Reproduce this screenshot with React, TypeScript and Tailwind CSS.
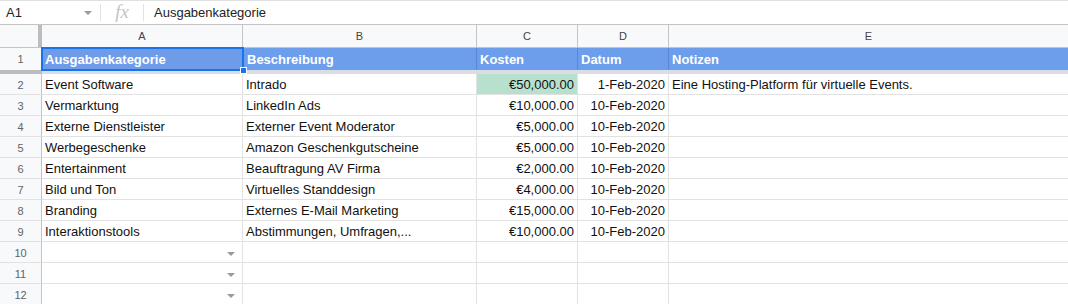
import React from "react";

type Row = {
  a: string;
  b: string;
  c: string;
  d: string;
  e: string;
};

const rows: Row[] = [
  { a: "Event Software", b: "Intrado", c: "€50,000.00", d: "1-Feb-2020", e: "Eine Hosting-Platform für virtuelle Events." },
  { a: "Vermarktung", b: "LinkedIn Ads", c: "€10,000.00", d: "10-Feb-2020", e: "" },
  { a: "Externe Dienstleister", b: "Externer Event Moderator", c: "€5,000.00", d: "10-Feb-2020", e: "" },
  { a: "Werbegeschenke", b: "Amazon Geschenkgutscheine", c: "€5,000.00", d: "10-Feb-2020", e: "" },
  { a: "Entertainment", b: "Beauftragung AV Firma", c: "€2,000.00", d: "10-Feb-2020", e: "" },
  { a: "Bild und Ton", b: "Virtuelles Standdesign", c: "€4,000.00", d: "10-Feb-2020", e: "" },
  { a: "Branding", b: "Externes E-Mail Marketing", c: "€15,000.00", d: "10-Feb-2020", e: "" },
  { a: "Interaktionstools", b: "Abstimmungen, Umfragen,...", c: "€10,000.00", d: "10-Feb-2020", e: "" },
];

const font = { fontFamily: '"Liberation Sans", Arial, sans-serif' };

function DropArrow() {
  return (
    <svg width="8" height="4" viewBox="0 0 8 4" className="shrink-0">
      <path d="M0 0 L8 0 L4 4 Z" fill="#9a9a9a" />
    </svg>
  );
}

export default function App() {
  return (
    <div className="w-[1068px] h-[304px] overflow-hidden bg-white text-[13px] text-[#111]" style={font}>
      {/* formula bar */}
      <div className="flex h-[24px] items-center border-t border-[#e0e0e0]">
        <div className="flex w-[100px] items-center justify-between pl-[6px] pr-[8px] text-[13px] text-[#222]">
          <span>A1</span>
          <DropArrow />
        </div>
        <div className="h-[17px] w-px bg-[#e2e2e2]" />
        <div className="flex w-[42px] items-center justify-center">
          <span className="text-[19px] italic text-[#c4c4c4]" style={{ fontFamily: '"Liberation Serif", serif' }}>
            fx
          </span>
        </div>
        <div className="h-[17px] w-px bg-[#e2e2e2]" />
        <span className="pl-[10px] text-[13px] text-[#222]">Ausgabenkategorie</span>
      </div>

      {/* column headers */}
      <div className="flex h-[24px] border-t border-[#c4c4c4] border-b border-b-[#c4c4c4] bg-[#f8f9fa] text-[11px] text-[#444]">
        <div className="w-[38px] shrink-0" />
        <div className="w-[4px] shrink-0 bg-[#bdbdbd]" />
        <div className="flex w-[201px] shrink-0 items-center justify-center border-r border-[#c4c4c4] pt-px">A</div>
        <div className="flex w-[234px] shrink-0 items-center justify-center border-r border-[#c4c4c4] pt-px">B</div>
        <div className="flex w-[101px] shrink-0 items-center justify-center border-r border-[#c4c4c4] pt-px">C</div>
        <div className="flex w-[91px] shrink-0 items-center justify-center border-r border-[#c4c4c4] pt-px">D</div>
        <div className="flex flex-1 items-center justify-center pt-px">E</div>
      </div>

      {/* row 1 */}
      <div className="flex h-[22px]">
        <div className="flex w-[42px] shrink-0 items-center justify-center border-r border-[#c4c4c4] bg-[#f8f9fa] pt-px text-[11px] text-[#5f6368]">
          1
        </div>
        <div className="relative flex w-[201px] shrink-0 items-center bg-[#6f9ce9] pl-[3px] pt-px font-bold text-white">
          Ausgabenkategorie
          <div className="pointer-events-none absolute inset-x-[-1px] -top-px -bottom-px border-2 border-[#1a73e8]" />
          <div className="absolute -bottom-[4px] -right-[4px] h-[7px] w-[7px] border border-white bg-[#1a73e8]" />
        </div>
        <div className="flex w-[234px] shrink-0 items-center border-r border-[#5a88d6] bg-[#6d9eeb] pl-[4px] pt-px font-bold text-white">
          Beschreibung
        </div>
        <div className="flex w-[101px] shrink-0 items-center border-r border-[#5a88d6] bg-[#6d9eeb] pl-[3px] pt-px font-bold text-white">
          Kosten
        </div>
        <div className="flex w-[91px] shrink-0 items-center border-r border-[#5a88d6] bg-[#6d9eeb] pl-[3px] pt-px font-bold text-white">
          Datum
        </div>
        <div className="flex flex-1 items-center bg-[#6d9eeb] pl-[3px] pt-px font-bold text-white">Notizen</div>
      </div>

      {/* frozen bar */}
      <div className="flex h-[4px]">
        <div className="w-[42px] shrink-0 bg-[#bdbdbd]" />
        <div className="flex-1 bg-[#d9dde4]" />
      </div>

      {/* data rows */}
      {rows.map((r, i) => (
        <div key={i} className="flex h-[21px]">
          <div className="flex w-[42px] shrink-0 items-center justify-center border-r border-b border-[#c4c4c4] border-b-[#e2e2e2] bg-[#f8f9fa] pt-[2px] text-[11px] text-[#5f6368]">
            {i + 2}
          </div>
          <div className="flex w-[201px] shrink-0 items-end border-r border-b border-[#e2e2e3] pl-[3px]">{r.a}</div>
          <div className="flex w-[234px] shrink-0 items-end border-r border-b border-[#e2e2e3] pl-[3px]">{r.b}</div>
          <div
            className={
              i === 0
                ? "flex w-[101px] shrink-0 items-end justify-end border-r border-b border-[#e2e2e3] bg-[#b7e1cd] pr-[3px]"
                : "flex w-[101px] shrink-0 items-end justify-end border-r border-b border-[#e2e2e3] pr-[3px]"
            }
          >
            {r.c}
          </div>
          <div className="flex w-[91px] shrink-0 items-end justify-end border-r border-b border-[#e2e2e3] pr-[3px]">{r.d}</div>
          <div className="flex flex-1 items-end border-b border-[#e2e2e3] pl-[3px]">{r.e}</div>
        </div>
      ))}

      {/* empty rows with dropdowns */}
      {[10, 11, 12].map((n) => (
        <div key={n} className="flex h-[21px]">
          <div className="flex w-[42px] shrink-0 items-center justify-center border-r border-b border-[#c4c4c4] border-b-[#e2e2e2] bg-[#f8f9fa] pt-[2px] text-[11px] text-[#5f6368]">
            {n}
          </div>
          <div className="flex w-[201px] shrink-0 items-center justify-end border-r border-b border-[#e2e2e3] pr-[7px] pt-[3px]">
            <DropArrow />
          </div>
          <div className="w-[234px] shrink-0 border-r border-b border-[#e2e2e3]" />
          <div className="w-[101px] shrink-0 border-r border-b border-[#e2e2e3]" />
          <div className="w-[91px] shrink-0 border-r border-b border-[#e2e2e3]" />
          <div className="flex-1 border-b border-[#e2e2e3]" />
        </div>
      ))}
    </div>
  );
}
